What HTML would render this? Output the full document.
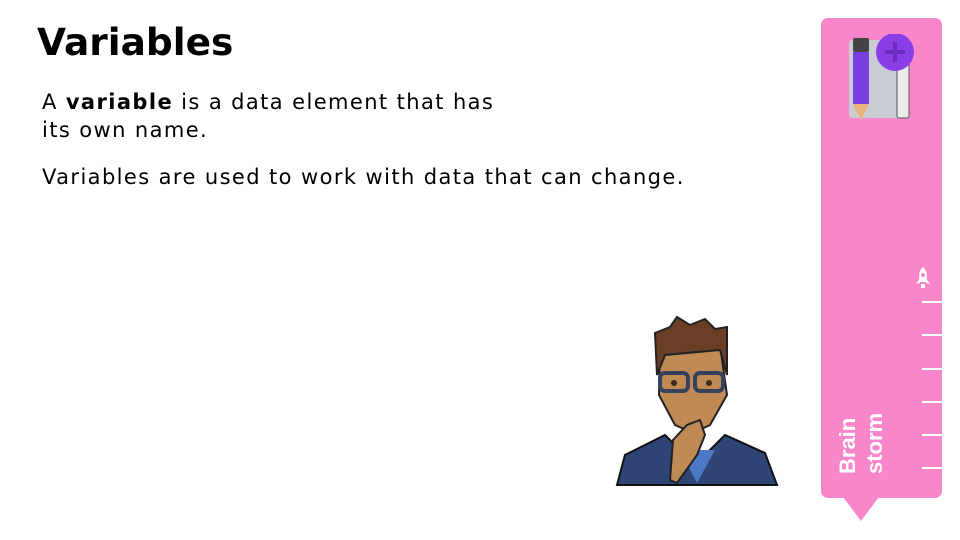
<!DOCTYPE html>
<html><head><style>
body{margin:0;width:960px;height:540px;background:#fff;position:relative;overflow:hidden;font-family:"DejaVu Sans","Liberation Sans",sans-serif;color:#000}
h1{position:absolute;left:37px;top:20px;margin:0;font-size:37.5px;font-weight:bold;letter-spacing:0}
.t{position:absolute;left:42px;font-size:21px;line-height:28px;letter-spacing:1.4px}
.panel{position:absolute;left:821px;top:18px;width:121px;height:480px;background:#f886cb;border-radius:7px}
.tri{position:absolute;left:843px;top:497px;width:0;height:0;border-left:18px solid transparent;border-right:18px solid transparent;border-top:24px solid #f886cb}
.tick{position:absolute;left:922px;width:20px;height:2px;background:#fff}
.bs{position:absolute;left:834px;top:474px;transform:rotate(-90deg);transform-origin:0 0;color:#fff;font-weight:bold;font-size:22px;line-height:27px;width:80px;font-family:"Liberation Sans",sans-serif}
</style></head><body>
<h1>Variables</h1>
<div class="t" style="top:88px">A <b>variable</b> is a data element that has<br>its own name.</div>
<div class="t" style="top:163px">Variables are used to work with data that can change.</div>
<div class="panel"></div><div class="tri"></div>
<svg style="position:absolute;left:845px;top:34px" width="70" height="88" viewBox="0 0 70 88">
<rect x="4" y="6" width="54" height="78" rx="3" fill="#c9ccd3"/>
<rect x="52" y="12" width="12" height="72" rx="2" fill="#ececec" stroke="#555" stroke-width="1"/>
<rect x="8" y="4" width="16" height="14" rx="2" fill="#444"/>
<rect x="8" y="18" width="16" height="52" fill="#7a3fe0"/>
<polygon points="8,70 24,70 16,86" fill="#e8b27a"/>
<circle cx="50" cy="18" r="19" fill="#8a3fe6"/>
<rect x="48" y="8" width="4" height="20" fill="#6a2cc0"/><rect x="40" y="16" width="20" height="4" fill="#6a2cc0"/>
</svg>
<svg style="position:absolute;left:914px;top:266px" width="18" height="24" viewBox="0 0 18 24">
<path d="M9 1 C14 5 13 12 12 16 L6 16 C5 12 4 5 9 1Z" fill="#fff"/><path d="M6 12 L2 18 L6 17Z M12 12 L16 18 L12 17Z" fill="#fff"/><rect x="7" y="18" width="4" height="4" fill="#fff"/><circle cx="9" cy="9" r="2" fill="#f886cb"/>
</svg>
<div class="tick" style="top:301px"></div><div class="tick" style="top:334px"></div><div class="tick" style="top:368px"></div><div class="tick" style="top:401px"></div><div class="tick" style="top:434px"></div><div class="tick" style="top:467px"></div>
<div class="bs">Brain<br>storm</div>
<svg style="position:absolute;left:615px;top:315px" width="165" height="172" viewBox="0 0 165 172">
<path d="M2 170 L10 140 L50 120 L80 150 L110 120 L150 138 L162 170Z" fill="#2f4577" stroke="#111" stroke-width="2"/>
<path d="M65 135 L82 168 L100 135Z" fill="#4c78c4"/>
<path d="M45 30 L105 30 L112 80 L95 110 L78 118 L60 110 L44 80Z" fill="#c08a55" stroke="#222" stroke-width="2"/>
<path d="M42 60 L40 18 L55 12 L62 2 L75 10 L90 4 L100 14 L112 12 L112 60 L105 35 L50 40Z" fill="#6b3f26" stroke="#222" stroke-width="2"/>
<rect x="45" y="58" width="28" height="18" rx="5" fill="none" stroke="#34425c" stroke-width="4"/>
<rect x="80" y="58" width="28" height="18" rx="5" fill="none" stroke="#34425c" stroke-width="4"/>
<circle cx="59" cy="68" r="3" fill="#3a2a1e"/><circle cx="94" cy="68" r="3" fill="#3a2a1e"/>
<path d="M55 165 L58 125 L72 110 L85 105 L90 120 L82 140 L62 168Z" fill="#c08a55" stroke="#222" stroke-width="2"/>
</svg>
</body></html>
